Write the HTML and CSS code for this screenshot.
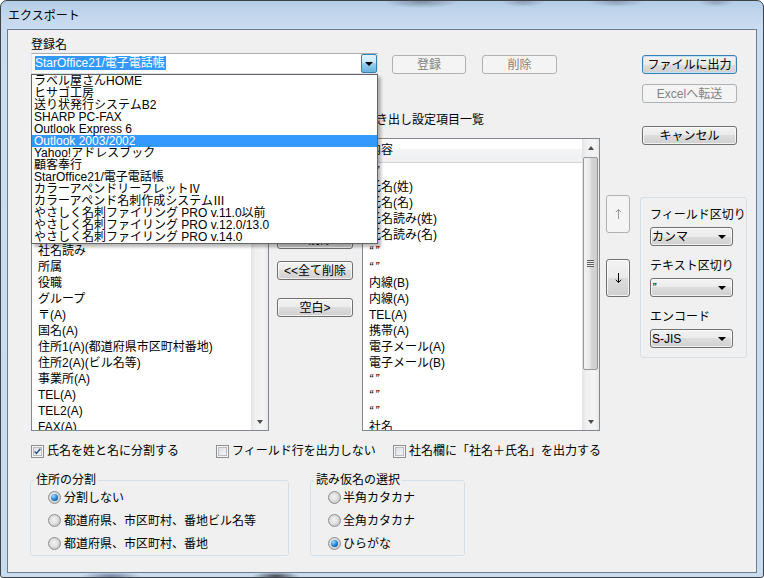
FILE: index.html
```html
<!DOCTYPE html>
<html lang="ja">
<head>
<meta charset="utf-8">
<title>エクスポート</title>
<link rel="stylesheet" href="styles.css">
</head>
<body>
<div class="window">
  <div class="titlebar">エクスポート</div>
  <div class="client">
    <div class="main">
      <div class="leftpane">
        <div class="lbl">登録名</div>
        <div class="toprow">
          <div class="combo">
            <div class="combo-text"><span class="sel">StarOffice21/電子電話帳</span></div>
            <div class="combo-btn"><i class="tri"></i></div>
            <ul class="droplist">
              <li>ラベル屋さんHOME</li>
              <li>ヒサゴ工房</li>
              <li>送り状発行システムB2</li>
              <li>SHARP PC-FAX</li>
              <li>Outlook Express 6</li>
              <li class="hl">Outlook 2003/2002</li>
              <li>Yahoo!アドレスブック</li>
              <li>顧客奉行</li>
              <li>StarOffice21/電子電話帳</li>
              <li>カラーアペンドリーフレットⅣ</li>
              <li>カラーアペンド名刺作成システムⅢ</li>
              <li>やさしく名刺ファイリング PRO v.11.0以前</li>
              <li>やさしく名刺ファイリング PRO v.12.0/13.0</li>
              <li>やさしく名刺ファイリング PRO v.14.0</li>
            </ul>
          </div>
          <div class="btn disabled btn-reg">登録</div>
          <div class="btn disabled btn-del">削除</div>
        </div>
        <div class="listlabels">
          <span class="lbl-left">項目一覧</span>
          <span class="lbl-right">書き出し設定項目一覧</span>
        </div>
        <div class="lists">
          <div class="listbox">
            <div class="lb-body">
              <div class="lb-head">項目</div>
              <div class="lb-row">氏名(姓)</div>
              <div class="lb-row">氏名(名)</div>
              <div class="lb-row">氏名読み(姓)</div>
              <div class="lb-row">氏名読み(名)</div>
              <div class="lb-row">社名</div>
              <div class="lb-row">社名読み</div>
              <div class="lb-row">所属</div>
              <div class="lb-row">役職</div>
              <div class="lb-row">グループ</div>
              <div class="lb-row">〒(A)</div>
              <div class="lb-row">国名(A)</div>
              <div class="lb-row">住所1(A)(都道府県市区町村番地)</div>
              <div class="lb-row">住所2(A)(ビル名等)</div>
              <div class="lb-row">事業所(A)</div>
              <div class="lb-row">TEL(A)</div>
              <div class="lb-row">TEL2(A)</div>
              <div class="lb-row">FAX(A)</div>
            </div>
            <div class="vscroll">
              <div class="sb-arrow"><i class="sb-up"></i></div>
              <div class="sb-track"><div class="sb-thumb thumb-left"><span class="grip"></span></div></div>
              <div class="sb-arrow"><i class="sb-down"></i></div>
            </div>
          </div>
          <div class="midbtns">
            <div class="btn">追加 &gt;</div>
            <div class="btn">全て追加 &gt;&gt;</div>
            <div class="btn">&lt; 削除</div>
            <div class="btn">&lt;&lt;全て削除</div>
            <div class="btn btn-blank">空白&gt;</div>
          </div>
          <div class="listbox">
            <div class="lb-body">
              <div class="lb-head">内容</div>
              <div class="lb-row"><span class="q">“”</span></div>
              <div class="lb-row">氏名(姓)</div>
              <div class="lb-row">氏名(名)</div>
              <div class="lb-row">氏名読み(姓)</div>
              <div class="lb-row">氏名読み(名)</div>
              <div class="lb-row"><span class="q">“”</span></div>
              <div class="lb-row"><span class="q">“”</span></div>
              <div class="lb-row">内線(B)</div>
              <div class="lb-row">内線(A)</div>
              <div class="lb-row">TEL(A)</div>
              <div class="lb-row">携帯(A)</div>
              <div class="lb-row">電子メール(A)</div>
              <div class="lb-row">電子メール(B)</div>
              <div class="lb-row"><span class="q">“”</span></div>
              <div class="lb-row"><span class="q">“”</span></div>
              <div class="lb-row"><span class="q">“”</span></div>
              <div class="lb-row">社名</div>
            </div>
            <div class="vscroll">
              <div class="sb-arrow"><i class="sb-up"></i></div>
              <div class="sb-track"><div class="sb-thumb thumb-right"><span class="grip"></span></div></div>
              <div class="sb-arrow"><i class="sb-down"></i></div>
            </div>
          </div>
        </div>
      </div>
      <div class="rightpane">
        <div class="rbtns">
          <div class="btn default">ファイルに出力</div>
          <div class="btn disabled btn-excel">Excelへ転送</div>
          <div class="btn btn-cancel">キャンセル</div>
        </div>
        <div class="arrowrow">
          <div class="arrows">
            <div class="btn disabled arrowbtn">
              <svg width="9" height="12" viewBox="0 0 9 12"><path d="M4.5 1.5V11M1.8 4.2L4.5 1.5L7.2 4.2" fill="none" stroke="#9a9a9a" stroke-width="1"/></svg>
            </div>
            <div class="btn arrowbtn arrow-down">
              <svg width="9" height="12" viewBox="0 0 9 12"><path d="M4.5 1V10.5M1.8 7.8L4.5 10.5L7.2 7.8" fill="none" stroke="#000" stroke-width="1"/></svg>
            </div>
          </div>
          <div class="optgroup">
            <div class="lbl">フィールド区切り</div>
            <div class="ddl"><span>カンマ</span><i class="tri"></i></div>
            <div class="lbl lbl-gap">テキスト区切り</div>
            <div class="ddl"><span class="q">”</span><i class="tri"></i></div>
            <div class="lbl lbl-gap">エンコード</div>
            <div class="ddl"><span>S-JIS</span><i class="tri"></i></div>
          </div>
        </div>
      </div>
    </div>
    <div class="checks">
      <label class="chk chk1"><span class="cbox checked"><svg width="11" height="11" viewBox="0 0 11 11"><path d="M2 5.5L4.3 8L9 2.2" fill="none" stroke="#2f4f8f" stroke-width="1.7"/></svg></span>氏名を姓と名に分割する</label>
      <label class="chk chk2"><span class="cbox"></span>フィールド行を出力しない</label>
      <label class="chk"><span class="cbox"></span>社名欄に「社名＋氏名」を出力する</label>
    </div>
    <div class="groups">
      <fieldset class="grp grp-addr">
        <legend>住所の分割</legend>
        <div class="radio-row"><span class="radio on"><span class="dot"></span></span>分割しない</div>
        <div class="radio-row"><span class="radio"></span>都道府県、市区町村、番地ビル名等</div>
        <div class="radio-row"><span class="radio"></span>都道府県、市区町村、番地</div>
      </fieldset>
      <fieldset class="grp grp-kana">
        <legend>読み仮名の選択</legend>
        <div class="radio-row"><span class="radio"></span>半角カタカナ</div>
        <div class="radio-row"><span class="radio"></span>全角カタカナ</div>
        <div class="radio-row"><span class="radio on"><span class="dot"></span></span>ひらがな</div>
      </fieldset>
    </div>
  </div>
</div>
</body>
</html>
```
FILE: styles.css
```css
* { box-sizing: border-box; }
html, body { margin: 0; padding: 0; }
body {
  width: 764px;
  height: 578px;
  overflow: hidden;
  background: #ffffff;
  font: 12px/12px "Liberation Sans", "Noto Sans CJK JP", sans-serif;
  color: #000;
}

.window {
  width: 764px;
  height: 578px;
  display: flex;
  flex-direction: column;
  padding: 0 6px 4px;
  border: 1px solid #3d4246;
  border-radius: 7px 7px 3px 3px;
  background:
    radial-gradient(ellipse 38px 6px at 420px 1px, rgba(50,58,68,.4), transparent),
    radial-gradient(ellipse 22px 5px at 522px 1px, rgba(50,58,68,.3), transparent),
    radial-gradient(ellipse 28px 5px at 615px 1px, rgba(50,58,68,.3), transparent),
    radial-gradient(ellipse 18px 5px at 715px 1px, rgba(50,58,68,.28), transparent),
    radial-gradient(ellipse 30px 4px at 110px 575px, rgba(40,60,90,.55), transparent),
    radial-gradient(ellipse 24px 4px at 275px 575px, rgba(20,25,30,.75), transparent),
    linear-gradient(#b3cce7, #c1d6ed 12px, #cadcf0 28px, #c9dbef 100%);
}

.titlebar {
  height: 28px;
  line-height: 28px;
  padding-left: 1px;
  font-family: "Noto Sans CJK JP", sans-serif;
  font-size: 12px;
  color: #000;
}

.client {
  flex: 1;
  background: #f0f0f0;
  border: 1px solid #6d7d8e;
  padding: 9px 0 0 23px;
  display: flex;
  flex-direction: column;
}

.main { display: flex; align-items: flex-start; }
.leftpane { width: 569px; }

.lbl { height: 12px; line-height: 12px; white-space: nowrap; }

.toprow { display: flex; align-items: flex-start; margin-top: 2px; }

.combo {
  position: relative;
  width: 347px;
  height: 21px;
  background: #fff;
  border: 1px solid #dbdfe6;
  border-top-color: #abadb3;
  border-left-color: #e2e3ea;
  display: flex;
}
.combo-text { flex: 1; padding: 2px 0 0 3px; }
.sel {
  display: inline-block;
  background: #3399ff;
  color: #fff;
  height: 14px;
  line-height: 14px;
  padding-right: 1px;
}
.combo-btn {
  width: 16px;
  height: 19px;
  border: 1px solid #3c7fb1;
  border-radius: 2px;
  background: linear-gradient(#e5f4fc, #c4e5f6 50%, #98d1ef 50%, #68b3db);
  display: flex;
  align-items: center;
  justify-content: center;
}
.tri {
  display: block;
  width: 0;
  height: 0;
  border-left: 4px solid transparent;
  border-right: 4px solid transparent;
  border-top: 4px solid #000;
}

.droplist {
  position: absolute;
  left: -1px;
  top: 20px;
  width: 347px;
  margin: 0;
  padding: 0;
  list-style: none;
  background: #fff;
  border: 1px solid #646464;
  box-shadow: 3px 3px 3px rgba(0,0,0,.28);
  z-index: 10;
}
.droplist li {
  height: 12px;
  line-height: 12px;
  padding-left: 2px;
  white-space: nowrap;
}
.droplist li.hl { background: #3399ff; color: #fff; }

.btn {
  height: 19px;
  border: 1px solid #707070;
  border-radius: 3px;
  background: linear-gradient(#f2f2f2, #ebebeb 50%, #dddddd 50%, #cfcfcf);
  box-shadow: inset 0 0 0 1px rgba(255,255,255,.7);
  display: flex;
  align-items: center;
  justify-content: center;
  white-space: nowrap;
  color: #000;
}
.btn.disabled {
  border-color: #adb2b5;
  background: #f4f4f4;
  box-shadow: none;
  color: #838383;
}
.btn.default {
  border-color: #3c7fb1;
  box-shadow: inset 0 0 0 1px #bfe4f8;
}
.btn-reg { width: 74px; margin: 2px 0 0 14px; }
.btn-del { width: 75px; margin: 2px 0 0 16px; }

.listlabels { display: flex; margin-top: 40px; height: 12px; }
.lbl-left { width: 333px; }

.lists { display: flex; margin-top: 12px; }
.listbox {
  width: 238px;
  height: 293px;
  border: 1px solid #828790;
  background: #fff;
  display: flex;
}
.lb-body { flex: 1; overflow: hidden; }
.lb-head {
  height: 24px;
  line-height: 23px;
  padding-left: 6px;
  border-bottom: 1px solid #d5d5d5;
  background: linear-gradient(#ffffff, #ffffff 45%, #f3f4f6 45%, #f0f1f3);
}
.lb-row {
  height: 16px;
  line-height: 16px;
  padding-left: 6px;
  white-space: nowrap;
}
.q { letter-spacing: 2px; font-style: italic; }

.vscroll {
  width: 17px;
  display: flex;
  flex-direction: column;
  background: linear-gradient(90deg, #e3e3e3, #f0f0f0 25%, #f4f4f4 75%, #e8e8e8);
}
.sb-arrow {
  height: 17px;
  display: flex;
  align-items: center;
  justify-content: center;
}
.sb-up, .sb-down {
  display: block;
  width: 0;
  height: 0;
  border-left: 3.5px solid transparent;
  border-right: 3.5px solid transparent;
}
.sb-up { border-bottom: 4px solid #4d4d4d; }
.sb-down { border-top: 4px solid #4d4d4d; }
.sb-track { flex: 1; padding: 1px 1px 0; }
.sb-thumb {
  border: 1px solid #979797;
  border-radius: 2px;
  background: linear-gradient(90deg, #f3f3f3, #e8e8e8 45%, #d6d6d6 55%, #cdcdcd);
  display: flex;
  align-items: center;
  justify-content: center;
}
.thumb-right { height: 213px; }
.thumb-left { height: 70px; }
.grip {
  width: 7px;
  height: 7px;
  background: repeating-linear-gradient(#5c5c5c 0 1px, #efefef 1px 2px);
}

.midbtns {
  width: 76px;
  margin: 0 9px 0 8px;
  padding-top: 30px;
  display: flex;
  flex-direction: column;
  gap: 12px;
}
.btn-blank { margin-top: 6px; }

.rightpane { width: 156px; padding-left: 6px; }
.rbtns { margin: 16px 0 0 36px; width: 95px; }
.btn-excel { margin-top: 10px; }
.btn-cancel { margin-top: 23px; }

.arrowrow { display: flex; margin-top: 50px; }
.arrows { width: 24px; }
.arrowbtn { height: 38px; }
.arrow-down { margin-top: 26px; }

.optgroup {
  width: 107px;
  height: 161px;
  margin: 2px 0 0 10px;
  border: 1px solid #d5dfe5;
  border-radius: 3px;
  padding: 11px 0 0 9px;
}
.lbl-gap { margin-top: 14px; }
.ddl {
  width: 83px;
  height: 19px;
  margin-top: 6px;
  border: 1px solid #707070;
  border-radius: 3px;
  background: linear-gradient(#f2f2f2, #ebebeb 50%, #dddddd 50%, #cfcfcf);
  box-shadow: inset 0 0 0 1px rgba(255,255,255,.7);
  display: flex;
  align-items: center;
  padding: 0 6px 0 1px;
}
.ddl .tri { margin-left: auto; }

.checks {
  display: flex;
  margin-top: 14px;
  height: 13px;
}
.chk {
  display: flex;
  align-items: center;
  gap: 3px;
  white-space: nowrap;
  line-height: 13px;
}
.chk1 { width: 185px; }
.chk2 { width: 177px; }
.cbox {
  width: 13px;
  height: 13px;
  border: 1px solid #8e8f8f;
  background: #f4f4f4;
  padding: 1px;
  display: flex;
  align-items: center;
  justify-content: center;
  box-shadow: inset 0 0 0 1px #f6f6f6, inset 0 0 0 2px #b9bdc2;
  background-image: linear-gradient(135deg, #d6d9de, #fbfbfb);
  flex: none;
}

.groups { display: flex; margin: 16px 0 0 -1px; }
.grp {
  margin: 0;
  padding: 0;
  border: 1px solid #d5dfe5;
  border-radius: 3px;
  height: 82px;
  min-width: 0;
}
.grp legend {
  padding: 0 2px;
  margin-left: 3px;
  line-height: 12px;
  height: 12px;
}
.grp-addr { width: 259px; }
.grp-kana { width: 155px; margin-left: 21px; }
.radio-row {
  height: 23px;
  display: flex;
  align-items: center;
  gap: 3px;
  padding-left: 17px;
  white-space: nowrap;
}
.grp-kana .radio-row { gap: 2px; }
.radio {
  width: 13px;
  height: 13px;
  border-radius: 50%;
  border: 1px solid #8e8f8f;
  background: radial-gradient(circle at 45% 45%, #f2f2f2 0, #e3e3e3 40%, #c9c9c9 70%, #f4f4f4 100%);
  display: grid;
  place-items: center;
  flex: none;
}
.dot {
  width: 7px;
  height: 7px;
  border-radius: 50%;
  background: radial-gradient(circle at 35% 30%, #a8ddff 0, #3d97e0 40%, #0c5aa6 75%, #0a3f78 100%);
}
```
